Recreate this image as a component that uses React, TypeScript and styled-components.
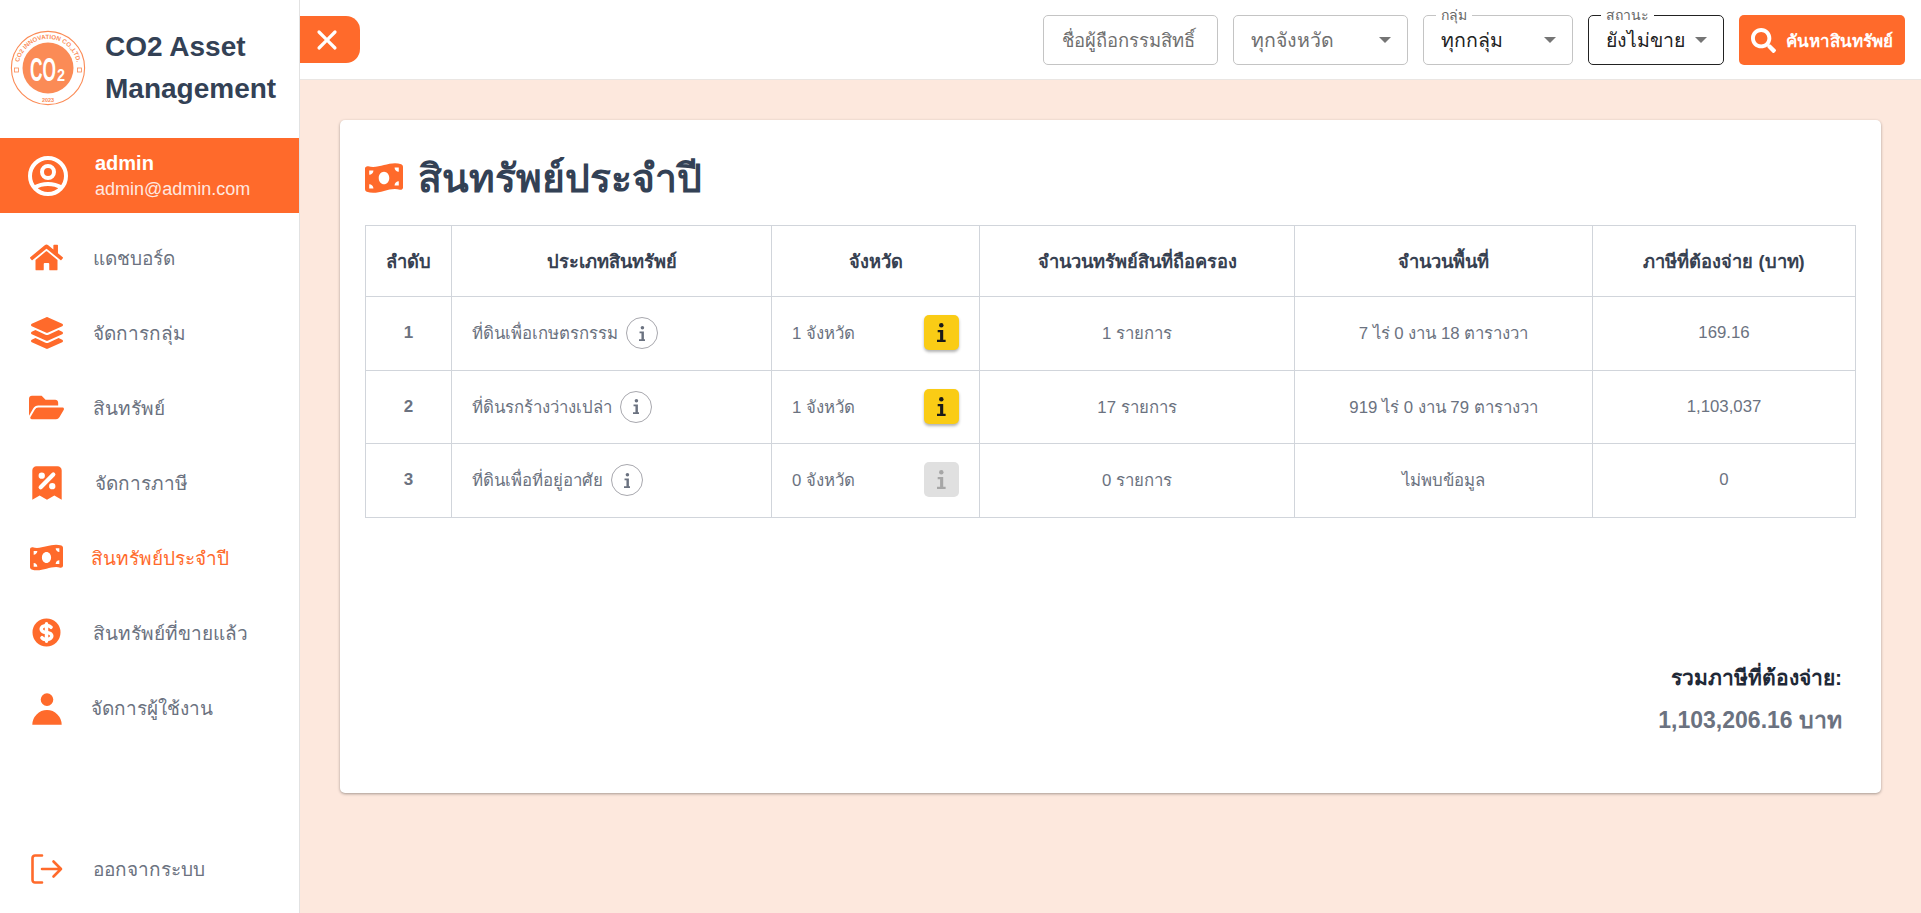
import React from 'react';
import styled, { createGlobalStyle } from 'styled-components';
import { FaFolderOpen, FaHome, FaLayerGroup, FaSearch } from 'react-icons/fa';
import { FaMoneyBillWave } from 'react-icons/fa6';
import { HiCurrencyDollar, HiOutlineUserCircle, HiReceiptTax, HiUser, HiX } from 'react-icons/hi';

const ORANGE = '#ff6a2b';

const GlobalStyle = createGlobalStyle`
  * { box-sizing: border-box; }
  html, body { margin: 0; padding: 0; }
  body {
    font-family: "Liberation Sans", "Noto Sans", "Noto Sans CJK SC", sans-serif;
    background: #fde8dd;
  }
`;

const navItems = [
  { label: 'แดชบอร์ด', icon: <FaHome size={33} />, textOffset: 0 },
  { label: 'จัดการกลุ่ม', icon: <FaLayerGroup size={32} />, textOffset: 0 },
  { label: 'สินทรัพย์', icon: <FaFolderOpen size={35} />, textOffset: 0 },
  { label: 'จัดการภาษี', icon: <HiReceiptTax size={42} />, textOffset: 2 },
  { label: 'สินทรัพย์ประจำปี', icon: <FaMoneyBillWave size={33} />, textOffset: -2, active: true },
  { label: 'สินทรัพย์ที่ขายแล้ว', icon: <HiCurrencyDollar size={35} />, textOffset: 0 },
  { label: 'จัดการผู้ใช้งาน', icon: <HiUser size={42} />, textOffset: -2 },
];

const rows = [
  { no: 1, type: 'ที่ดินเพื่อเกษตรกรรม', province: 1, items: '1 รายการ', area: '7 ไร่ 0 งาน 18 ตารางวา', tax: '169.16' },
  { no: 2, type: 'ที่ดินรกร้างว่างเปล่า', province: 1, items: '17 รายการ', area: '919 ไร่ 0 งาน 79 ตารางวา', tax: '1,103,037' },
  { no: 3, type: 'ที่ดินเพื่อที่อยู่อาศัย', province: 0, items: '0 รายการ', area: 'ไม่พบข้อมูล', tax: '0' },
];

const Logo = () => (
  <svg width="76" height="76" viewBox="0 0 76 76">
    <defs>
      <path id="logoArc" d="M 9.5 46 A 29.5 29.5 0 1 1 66.5 46" fill="none" />
    </defs>
    <circle cx="38" cy="38" r="36.6" fill="none" stroke="#fb8b56" strokeWidth="1.1" />
    <circle cx="38" cy="38" r="25.5" fill="#fb8b56" />
    <text fontFamily="Liberation Sans" fontSize="6.2" fontWeight="700" fill="#fb8b56">
      <textPath href="#logoArc" startOffset="50%" textAnchor="middle">
        CO2 INNOVATION CO.,LTD.
      </textPath>
    </text>
    <rect x="4.5" y="38" width="4" height="4" fill="none" stroke="#fb8b56" strokeWidth="0.8" />
    <rect x="67.5" y="38" width="4" height="4" fill="none" stroke="#fb8b56" strokeWidth="0.8" />
    <text x="20" y="51" fontFamily="Liberation Sans" fontSize="34" fontWeight="700" fill="#fff" textLength="26" lengthAdjust="spacingAndGlyphs">
      CO
    </text>
    <text x="47" y="51" fontFamily="Liberation Sans" fontSize="16" fontWeight="700" fill="#fff" textLength="8" lengthAdjust="spacingAndGlyphs">
      2
    </text>
    <text x="38" y="72" textAnchor="middle" fontFamily="Liberation Sans" fontSize="5.5" fontWeight="700" fill="#fb8b56">
      2023
    </text>
  </svg>
);

const LogoutIcon = () => (
  <svg width="32" height="30" viewBox="0 0 32 30" fill="none" stroke="currentColor" strokeWidth="2.6" strokeLinecap="round" strokeLinejoin="round">
    <path d="M11 1.5H4a2.5 2.5 0 0 0-2.5 2.5v22A2.5 2.5 0 0 0 4 28.5h7" />
    <path d="M11 15h19M22.5 7.5L30 15l-7.5 7.5" />
  </svg>
);

const InfoGlyph = ({ height }: { height: number }) => (
  <svg height={height} viewBox="0 0 10 22" fill="currentColor">
    <circle cx="5" cy="2.6" r="2.6" />
    <path d="M0.8 8h6.4v11.4H10V22H0v-2.6h3.6v-8.8H0.8z" />
  </svg>
);

const App = () => {
  return (
    <Shell>
      <GlobalStyle />
      <Sidebar>
        <Brand>
          <Logo />
          <BrandName>CO2 Asset Management</BrandName>
        </Brand>
        <UserBand>
          <HiOutlineUserCircle size={48} />
          <UserText>
            <UserName>admin</UserName>
            <UserMail>admin@admin.com</UserMail>
          </UserText>
        </UserBand>
        <Nav>
          {navItems.map((item) => (
            <NavItem key={item.label}>
              <NavIcon>{item.icon}</NavIcon>
              <NavLabel $active={item.active} $offset={item.textOffset}>
                {item.label}
              </NavLabel>
            </NavItem>
          ))}
        </Nav>
        <Logout>
          <NavIcon>
            <LogoutIcon />
          </NavIcon>
          <NavLabel $offset={0}>ออกจากระบบ</NavLabel>
        </Logout>
      </Sidebar>

      <Main>
        <Header>
          <ToggleButton>
            <HiX size={32} />
          </ToggleButton>
          <Filters>
            <NameField>ชื่อผู้ถือกรรมสิทธิ์</NameField>
            <SelectField $width={175}>
              <SelectValue $muted>ทุกจังหวัด</SelectValue>
              <Caret />
            </SelectField>
            <SelectField $width={150}>
              <FloatLabel>กลุ่ม</FloatLabel>
              <SelectValue>ทุกกลุ่ม</SelectValue>
              <Caret />
            </SelectField>
            <SelectField $width={136} $dark>
              <FloatLabel>สถานะ</FloatLabel>
              <SelectValue>ยังไม่ขาย</SelectValue>
              <Caret />
            </SelectField>
            <SearchButton>
              <FaSearch size={25} />
              คันหาสินทรัพย์
            </SearchButton>
          </Filters>
        </Header>

        <Content>
          <Card>
            <CardTitle>
              <FaMoneyBillWave size={38} color={ORANGE} />
              สินทรัพย์ประจำปี
            </CardTitle>
            <Table>
              <colgroup>
                <col style={{ width: 86 }} />
                <col style={{ width: 320 }} />
                <col style={{ width: 208 }} />
                <col style={{ width: 315 }} />
                <col style={{ width: 298 }} />
                <col style={{ width: 263 }} />
              </colgroup>
              <thead>
                <tr>
                  <Th>ลำดับ</Th>
                  <Th>ประเภทสินทรัพย์</Th>
                  <Th>จังหวัด</Th>
                  <Th>จำนวนทรัพย์สินที่ถือครอง</Th>
                  <Th>จำนวนพื้นที่</Th>
                  <Th>ภาษีที่ต้องจ่าย (บาท)</Th>
                </tr>
              </thead>
              <tbody>
                {rows.map((row) => (
                  <tr key={row.no}>
                    <NoCell>{row.no}</NoCell>
                    <Td $left>
                      <TypeCell>
                        {row.type}
                        <InfoCircle>
                          <InfoGlyph height={15} />
                        </InfoCircle>
                      </TypeCell>
                    </Td>
                    <Td $left>
                      <ProvinceCell>
                        {row.province} จังหวัด
                        <ProvinceButton $disabled={row.province === 0}>
                          <InfoGlyph height={19} />
                        </ProvinceButton>
                      </ProvinceCell>
                    </Td>
                    <Td>{row.items}</Td>
                    <Td>{row.area}</Td>
                    <Td>{row.tax}</Td>
                  </tr>
                ))}
              </tbody>
            </Table>
            <Summary>
              <SummaryLabel>รวมภาษีที่ต้องจ่าย:</SummaryLabel>
              <SummaryValue>1,103,206.16 บาท</SummaryValue>
            </Summary>
          </Card>
        </Content>
      </Main>
    </Shell>
  );
};

export default App;

const Shell = styled.div`
  display: flex;
  width: 100%;
  height: 913px;
  overflow: hidden;
`;

const Sidebar = styled.aside`
  display: flex;
  flex-direction: column;
  flex: 0 0 300px;
  background: #fff;
  border-right: 1px solid #e2e2e2;
`;

const Brand = styled.div`
  display: flex;
  align-items: center;
  gap: 19px;
  height: 138px;
  padding: 0 10px 3px;
`;

const BrandName = styled.div`
  width: 180px;
  font-size: 28px;
  line-height: 42px;
  font-weight: 700;
  color: #334155;
`;

const UserBand = styled.div`
  display: flex;
  align-items: center;
  gap: 23px;
  height: 75px;
  padding-left: 24px;
  background: ${ORANGE};
  color: #fff;
`;

const UserText = styled.div`
  display: flex;
  flex-direction: column;
  gap: 3px;
`;

const UserName = styled.div`
  font-size: 20px;
  font-weight: 700;
  line-height: 24px;
`;

const UserMail = styled.div`
  font-size: 18px;
  line-height: 22px;
  opacity: 0.85;
`;

const Nav = styled.nav`
  display: flex;
  flex-direction: column;
  flex: 1;
  padding-top: 7px;
`;

const NavItem = styled.div`
  display: flex;
  align-items: center;
  height: 75px;
`;

const Logout = styled(NavItem)`
  margin-bottom: 7px;
`;

const NavIcon = styled.span`
  display: flex;
  justify-content: center;
  align-items: center;
  flex: 0 0 93px;
  color: ${ORANGE};
`;

const NavLabel = styled.span<{ $active?: boolean; $offset: number }>`
  margin-left: ${({ $offset }) => $offset}px;
  font-size: 19px;
  font-weight: 500;
  color: ${({ $active }) => ($active ? ORANGE : '#6b7280')};
`;

const Main = styled.main`
  display: flex;
  flex-direction: column;
  flex: 1;
  min-width: 0;
`;

const Header = styled.header`
  display: flex;
  justify-content: space-between;
  align-items: flex-start;
  height: 80px;
  padding: 15px 16px 0 0;
  background: #fff;
  border-bottom: 1px solid #eae6e3;
`;

const ToggleButton = styled.button`
  display: flex;
  justify-content: center;
  align-items: center;
  width: 60px;
  height: 47px;
  margin-top: 1px;
  padding: 0 6px 0 0;
  border: 0;
  border-radius: 0 14px 14px 0;
  background: ${ORANGE};
  color: #fff;
`;

const Filters = styled.div`
  display: flex;
  gap: 15px;
`;

const NameField = styled.div`
  display: flex;
  align-items: center;
  justify-content: center;
  width: 175px;
  height: 50px;
  padding-right: 4px;
  border: 1px solid #c4c4c4;
  border-radius: 5px;
  font-size: 18.4px;
  color: #6f6f6f;
`;

const SelectField = styled.div<{ $width: number; $dark?: boolean }>`
  position: relative;
  display: flex;
  align-items: center;
  justify-content: space-between;
  width: ${({ $width }) => $width}px;
  height: 50px;
  padding: 0 16px 0 17px;
  border: 1px solid ${({ $dark }) => ($dark ? '#222' : '#c4c4c4')};
  border-radius: 5px;
`;

const SelectValue = styled.span<{ $muted?: boolean }>`
  font-size: 19.5px;
  color: ${({ $muted }) => ($muted ? '#6f6f6f' : '#222')};
`;

const FloatLabel = styled.label`
  position: absolute;
  top: -8px;
  left: 12px;
  padding: 0 5px;
  background: #fff;
  font-size: 14px;
  line-height: 15px;
  color: #666;
`;

const Caret = styled.i`
  width: 0;
  height: 0;
  border-left: 6px solid transparent;
  border-right: 6px solid transparent;
  border-top: 6px solid #757575;
`;

const SearchButton = styled.button`
  display: flex;
  align-items: center;
  justify-content: center;
  gap: 10px;
  width: 166px;
  height: 50px;
  padding: 0;
  border: 0;
  border-radius: 5px;
  background: ${ORANGE};
  color: #fff;
  font-family: inherit;
  font-size: 17px;
  font-weight: 700;
`;

const Content = styled.div`
  flex: 1;
  padding: 40px;
`;

const Card = styled.section`
  display: flex;
  flex-direction: column;
  height: 673px;
  padding: 28px 24px 0 25px;
  background: #fff;
  border-radius: 5px;
  box-shadow: 0 1px 3px rgba(0, 0, 0, 0.35);
`;

const CardTitle = styled.h1`
  display: flex;
  align-items: center;
  gap: 15px;
  height: 60px;
  margin: 0 0 17px;
  font-size: 39px;
  font-weight: 700;
  color: #334155;
`;

const Table = styled.table`
  width: 1490px;
  table-layout: fixed;
  border-collapse: collapse;
`;

const Th = styled.th`
  height: 71px;
  padding-bottom: 1px;
  border: 1px solid #d1d5db;
  font-size: 18.3px;
  font-weight: 700;
  text-align: center;
  color: #374151;
`;

const Td = styled.td<{ $left?: boolean }>`
  height: 73.5px;
  padding: 0 ${({ $left }) => ($left ? '20px' : '0')};
  border: 1px solid #d1d5db;
  font-size: 16.8px;
  text-align: ${({ $left }) => ($left ? 'left' : 'center')};
  color: #6b7280;
`;

const NoCell = styled(Td)`
  font-size: 17px;
  font-weight: 700;
`;

const TypeCell = styled.div`
  display: flex;
  align-items: center;
  gap: 8px;
`;

const InfoCircle = styled.span`
  display: flex;
  justify-content: center;
  align-items: center;
  width: 32px;
  height: 32px;
  border: 1px solid #a8a8ae;
  border-radius: 50%;
  color: #6b7280;
`;

const ProvinceCell = styled.div`
  display: flex;
  justify-content: space-between;
  align-items: center;
`;

const ProvinceButton = styled.span<{ $disabled: boolean }>`
  display: flex;
  justify-content: center;
  align-items: center;
  width: 35px;
  height: 35px;
  margin-top: -1px;
  border-radius: 5px;
  background: ${({ $disabled }) => ($disabled ? '#e0e0e0' : '#facc15')};
  color: ${({ $disabled }) => ($disabled ? '#a6a6a6' : '#1a1a1a')};
  box-shadow: ${({ $disabled }) => ($disabled ? 'none' : '0 2px 3px rgba(0, 0, 0, 0.3)')};
`;

const Summary = styled.div`
  display: flex;
  flex-direction: column;
  align-items: flex-end;
  gap: 8px;
  margin-top: 143px;
  padding-right: 15px;
`;

const SummaryLabel = styled.div`
  font-size: 21px;
  font-weight: 700;
  color: #1f2937;
`;

const SummaryValue = styled.div`
  font-size: 23px;
  font-weight: 700;
  color: #6b7280;
`;
